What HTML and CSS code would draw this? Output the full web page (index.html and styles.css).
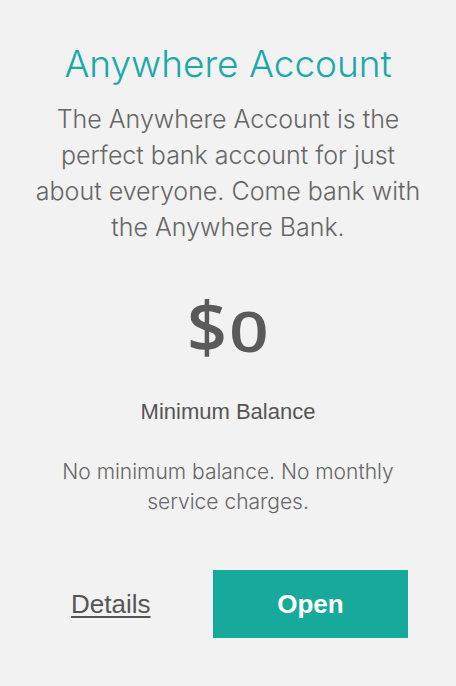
FILE: index.html
```html
<!DOCTYPE html>
<html>
<head>
<meta charset="utf-8">
<link rel="stylesheet" href="styles.css">
</head>
<body>
<div class="card">
  <h1 class="title">Anywhere Account</h1>
  <p class="desc">The Anywhere Account is the perfect bank account for just about everyone. Come bank with the Anywhere Bank.</p>
  <div class="amount"><span class="cur">$</span><span class="zero">0</span></div>
  <div class="label">Minimum Balance</div>
  <p class="note">No minimum balance. No monthly service charges.</p>
  <div class="actions">
    <a class="details" href="#">Details</a>
    <a class="open" href="#">Open</a>
  </div>
</div>
</body>
</html>
```
FILE: styles.css
```css
html, body {
  margin: 0;
  padding: 0;
  background: #f2f2f2;
}
.card {
  width: 456px;
  height: 686px;
  box-sizing: border-box;
  padding: 40px 30px 0;
  display: flex;
  flex-direction: column;
  align-items: center;
  text-align: center;
  font-family: "Inter", sans-serif;
}
.title {
  margin: 0;
  font-weight: 300;
  font-size: 37px;
  line-height: 48px;
  color: #19a9aa;
}
.desc {
  margin: 13px 0 0;
  font-weight: 300;
  font-size: 25px;
  line-height: 36px;
  color: #666;
}
.amount {
  margin-top: 45px;
  height: 76px;
  font-family: "Open Sans", sans-serif;
  line-height: 70px;
  color: #5a5a5a;
  display: flex;
  align-items: baseline;
}
.cur {
  font-size: 70px;
  font-weight: 600;
}
.zero {
  display: inline-block;
  font-size: 56px;
  font-weight: 600;
  margin-left: 2px;
  transform: scaleX(1.24);
  transform-origin: left center;
  margin-right: 8px;
}
.label {
  margin-top: 33px;
  font-family: "Liberation Sans", Arial, sans-serif;
  font-size: 22px;
  line-height: 26px;
  color: #555;
}
.note {
  margin: 32px 0 0;
  font-weight: 300;
  font-size: 21px;
  line-height: 30px;
  color: #666;
  max-width: 340px;
}
.actions {
  margin-top: 53px;
  align-self: stretch;
  display: flex;
  align-items: center;
  justify-content: space-between;
  padding: 0 18px 0 41px;
}
.details {
  font-family: "Liberation Sans", Arial, sans-serif;
  font-size: 26px;
  color: #555;
  text-decoration: underline;
  text-underline-offset: 3px;
}
.open {
  width: 195px;
  height: 68px;
  display: flex;
  align-items: center;
  justify-content: center;
  background: #18a99d;
  color: #fff;
  font-family: "Liberation Sans", Arial, sans-serif;
  font-weight: bold;
  font-size: 26px;
  text-decoration: none;
}
```
